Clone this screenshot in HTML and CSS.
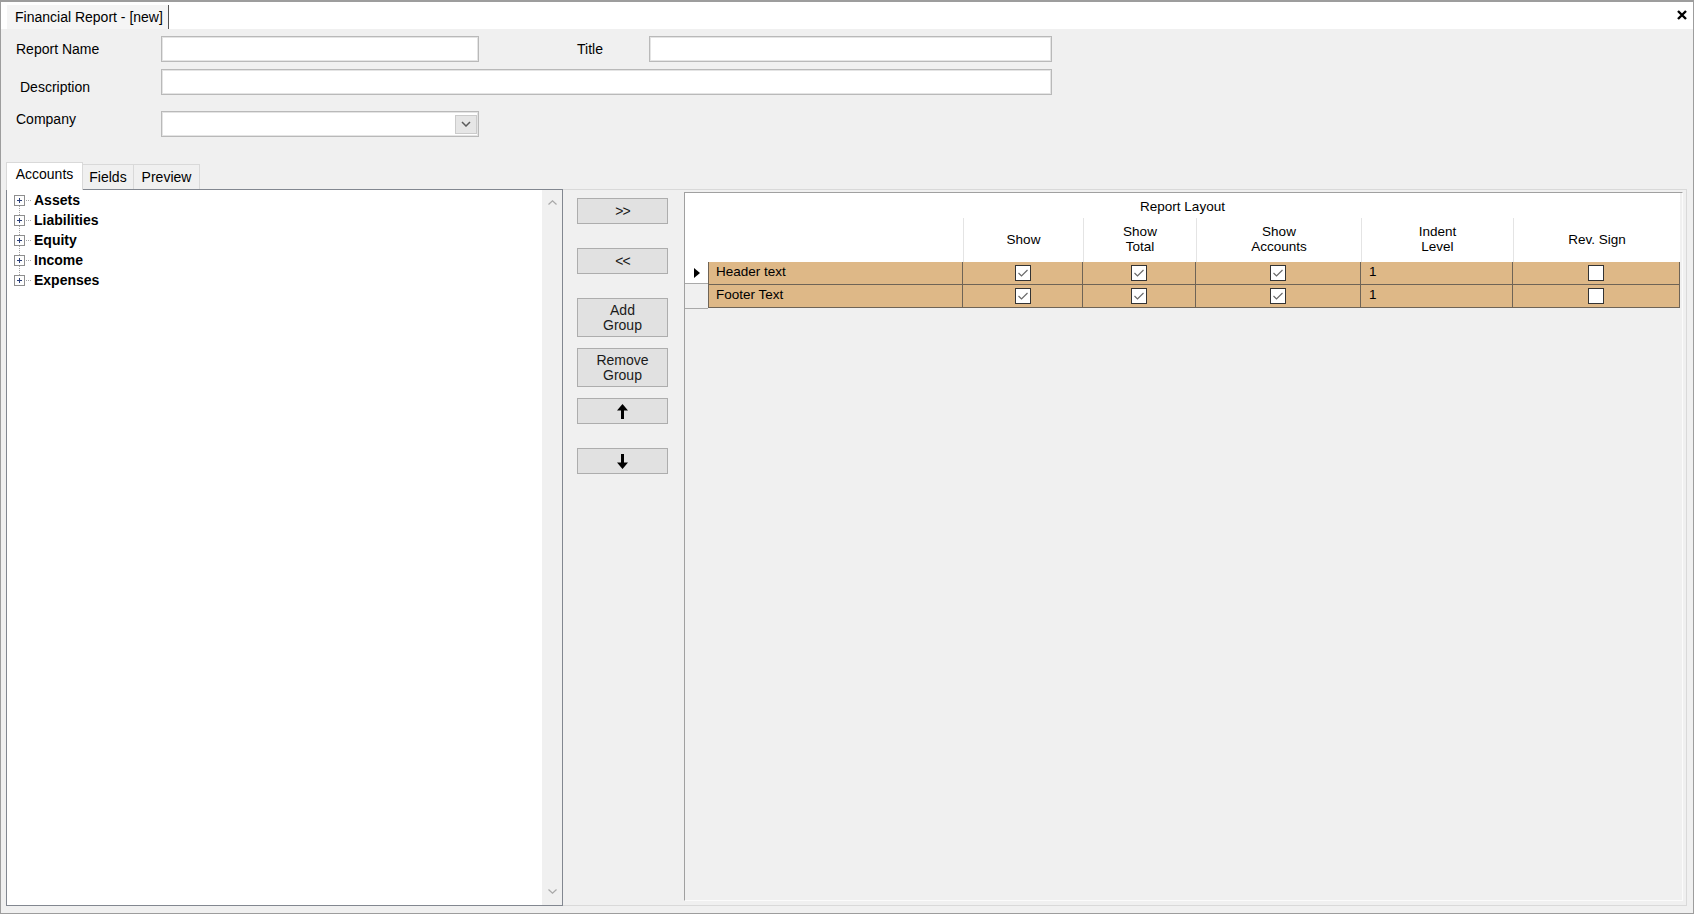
FILE: index.html
```html
<!DOCTYPE html>
<html>
<head>
<meta charset="utf-8">
<title>Financial Report</title>
<link rel="stylesheet" href="styles.css">
</head>
<body>
<div class="window">
  <div class="titlebar">
    <div class="doc-tab">Financial Report - [new]</div>
    <div class="close"><svg width="10" height="10" viewBox="0 0 10 10"><path d="M1 1L9 9M9 1L1 9" stroke="#000" stroke-width="2.4"/></svg></div>
  </div>

  <div class="row r1">
    <div class="lbl lbl-name">Report Name</div>
    <div class="input w-name"></div>
    <div class="lbl lbl-title">Title</div>
    <div class="input w-title"></div>
  </div>
  <div class="row r2">
    <div class="lbl lbl-desc">Description</div>
    <div class="input w-desc"></div>
  </div>
  <div class="row r3">
    <div class="lbl lbl-company">Company</div>
    <div class="input combo">
      <div class="combo-btn"><svg width="10" height="6" viewBox="0 0 10 6"><polyline points="1,1 5,5 9,1" fill="none" stroke="#5a5a5a" stroke-width="1.5"/></svg></div>
    </div>
  </div>

  <div class="tabs">
    <div class="tab active t-acc">Accounts</div>
    <div class="tab t-fields">Fields</div>
    <div class="tab t-prev">Preview</div>
  </div>

  <div class="page">
    <div class="tree">
      <div class="tree-content">
        <div class="tree-list">
          <div class="node"><span class="exp"><svg width="11" height="11" viewBox="0 0 11 11"><rect x="0.5" y="0.5" width="10" height="10" fill="#fdfdfd" stroke="#8e8e8e"/><path d="M3 5.5H8M5.5 3V8" stroke="#2b3f7a"/></svg></span><span class="conn"></span><span class="node-text">Assets</span></div>
          <div class="node"><span class="exp"><svg width="11" height="11" viewBox="0 0 11 11"><rect x="0.5" y="0.5" width="10" height="10" fill="#fdfdfd" stroke="#8e8e8e"/><path d="M3 5.5H8M5.5 3V8" stroke="#2b3f7a"/></svg></span><span class="conn"></span><span class="node-text">Liabilities</span></div>
          <div class="node"><span class="exp"><svg width="11" height="11" viewBox="0 0 11 11"><rect x="0.5" y="0.5" width="10" height="10" fill="#fdfdfd" stroke="#8e8e8e"/><path d="M3 5.5H8M5.5 3V8" stroke="#2b3f7a"/></svg></span><span class="conn"></span><span class="node-text">Equity</span></div>
          <div class="node"><span class="exp"><svg width="11" height="11" viewBox="0 0 11 11"><rect x="0.5" y="0.5" width="10" height="10" fill="#fdfdfd" stroke="#8e8e8e"/><path d="M3 5.5H8M5.5 3V8" stroke="#2b3f7a"/></svg></span><span class="conn"></span><span class="node-text">Income</span></div>
          <div class="node"><span class="exp"><svg width="11" height="11" viewBox="0 0 11 11"><rect x="0.5" y="0.5" width="10" height="10" fill="#fdfdfd" stroke="#8e8e8e"/><path d="M3 5.5H8M5.5 3V8" stroke="#2b3f7a"/></svg></span><span class="conn"></span><span class="node-text">Expenses</span></div>
        </div>
      </div>
      <div class="vscroll">
        <svg width="9" height="5" viewBox="0 0 9 5"><polyline points="0.5,4.5 4.5,0.8 8.5,4.5" fill="none" stroke="#a8a8a8" stroke-width="1.2"/></svg>
        <svg width="9" height="5" viewBox="0 0 9 5"><polyline points="0.5,0.5 4.5,4.2 8.5,0.5" fill="none" stroke="#a8a8a8" stroke-width="1.2"/></svg>
      </div>
    </div>

    <div class="mid">
      <div class="btn b1">&gt;&gt;</div>
      <div class="btn b2">&lt;&lt;</div>
      <div class="btn tall b3">Add<br>Group</div>
      <div class="btn tall b4">Remove<br>Group</div>
      <div class="btn b5"><svg width="11" height="15" viewBox="0 0 11 15"><path d="M5.5 0L11 6.5H7V15H4V6.5H0Z" fill="#000"/></svg></div>
      <div class="btn b6"><svg width="11" height="15" viewBox="0 0 11 15"><path d="M5.5 15L11 8.5H7V0H4V8.5H0Z" fill="#000"/></svg></div>
    </div>

    <div class="grid">
      <div class="dg">
        <div class="gh">Report Layout</div>

        <div class="ch"></div>
        <div class="ch"></div>
        <div class="ch sep">Show</div>
        <div class="ch sep">Show<br>Total</div>
        <div class="ch sep">Show<br>Accounts</div>
        <div class="ch sep">Indent<br>Level</div>
        <div class="ch sep">Rev. Sign</div>

        <div class="rh rh1"><svg width="6" height="10" viewBox="0 0 6 10"><path d="M0 0L6 5L0 10Z" fill="#000"/></svg></div>
        <div class="c name">Header text</div>
        <div class="c chk"><svg width="16" height="16" viewBox="0 0 16 16"><rect x="0.5" y="0.5" width="15" height="15" fill="#fff" stroke="#333"/><polyline points="3.5,8 6.5,11 12.5,5" fill="none" stroke="#6a6a6a" stroke-width="1.2"/></svg></div>
        <div class="c chk"><svg width="16" height="16" viewBox="0 0 16 16"><rect x="0.5" y="0.5" width="15" height="15" fill="#fff" stroke="#333"/><polyline points="3.5,8 6.5,11 12.5,5" fill="none" stroke="#6a6a6a" stroke-width="1.2"/></svg></div>
        <div class="c chk"><svg width="16" height="16" viewBox="0 0 16 16"><rect x="0.5" y="0.5" width="15" height="15" fill="#fff" stroke="#333"/><polyline points="3.5,8 6.5,11 12.5,5" fill="none" stroke="#6a6a6a" stroke-width="1.2"/></svg></div>
        <div class="c num">1</div>
        <div class="c chk"><svg width="16" height="16" viewBox="0 0 16 16"><rect x="0.5" y="0.5" width="15" height="15" fill="#fff" stroke="#333"/></svg></div>

        <div class="rh rh2"></div>
        <div class="c name">Footer Text</div>
        <div class="c chk"><svg width="16" height="16" viewBox="0 0 16 16"><rect x="0.5" y="0.5" width="15" height="15" fill="#fff" stroke="#333"/><polyline points="3.5,8 6.5,11 12.5,5" fill="none" stroke="#6a6a6a" stroke-width="1.2"/></svg></div>
        <div class="c chk"><svg width="16" height="16" viewBox="0 0 16 16"><rect x="0.5" y="0.5" width="15" height="15" fill="#fff" stroke="#333"/><polyline points="3.5,8 6.5,11 12.5,5" fill="none" stroke="#6a6a6a" stroke-width="1.2"/></svg></div>
        <div class="c chk"><svg width="16" height="16" viewBox="0 0 16 16"><rect x="0.5" y="0.5" width="15" height="15" fill="#fff" stroke="#333"/><polyline points="3.5,8 6.5,11 12.5,5" fill="none" stroke="#6a6a6a" stroke-width="1.2"/></svg></div>
        <div class="c num">1</div>
        <div class="c chk"><svg width="16" height="16" viewBox="0 0 16 16"><rect x="0.5" y="0.5" width="15" height="15" fill="#fff" stroke="#333"/></svg></div>
      </div>
    </div>
  </div>
</div>
</body>
</html>
```

FILE: styles.css
```css
html, body {
  margin: 0;
  padding: 0;
  background: #f0f0f0;
}

.window {
  width: 1694px;
  height: 914px;
  box-sizing: border-box;
  border: 1px solid #9d9d9d;
  border-top-width: 2px;
  background: #f0f0f0;
  display: flex;
  flex-direction: column;
  font-family: "Liberation Sans", Arial, sans-serif;
  font-size: 14px;
  color: #000;
  overflow: hidden;
}

/* ---------- title strip ---------- */
.titlebar {
  height: 27px;
  flex-shrink: 0;
  background: #fff;
  display: flex;
}

.doc-tab {
  margin-left: 6px;
  margin-top: 3px;
  height: 24px;
  line-height: 24px;
  padding: 0 5px 0 8px;
  background: #f5f5f5;
  border-right: 1px solid #555;
  box-sizing: border-box;
  white-space: nowrap;
}

.close {
  margin-left: auto;
  margin-right: 6px;
  margin-top: 8px;
  width: 10px;
  height: 10px;
  line-height: 0;
}

/* ---------- form ---------- */
.row {
  display: flex;
  align-items: flex-start;
  flex-shrink: 0;
}

.r1 { margin-top: 7px; }
.r2 { margin-top: 7px; }
.r3 { margin-top: 16px; }

.lbl {
  width: 160px;
  box-sizing: border-box;
  line-height: 16px;
  white-space: nowrap;
}

.lbl-name { padding-left: 15px; margin-top: 5px; }
.lbl-title { width: 72px; margin-left: 98px; margin-top: 5px; }
.lbl-desc { padding-left: 19px; margin-top: 10px; }
.lbl-company { padding-left: 15px; margin-top: 0; }

.input {
  height: 26px;
  box-sizing: border-box;
  background: #fff;
  border: 1px solid #b9b9b9;
  box-shadow: inset 0 0 0 1px #e4e4e4;
}

.w-name { width: 318px; }
.w-title { width: 403px; }
.w-desc { width: 891px; }

.combo {
  width: 318px;
  display: flex;
  justify-content: flex-end;
  align-items: center;
  padding-right: 1px;
}

.combo-btn {
  width: 22px;
  height: 19px;
  box-sizing: border-box;
  background: #e6e6e6;
  border: 1px solid #cbcbcb;
  display: flex;
  align-items: center;
  justify-content: center;
}

/* ---------- tabs ---------- */
.tabs {
  display: flex;
  align-items: flex-end;
  margin-top: 25px;
  padding-left: 5px;
  height: 27px;
  flex-shrink: 0;
  position: relative;
  z-index: 1;
}

.tab {
  height: 25px;
  box-sizing: border-box;
  border: 1px solid #d9d9d9;
  border-bottom: none;
  background: #f0f0f0;
  text-align: center;
  line-height: 16px;
  padding-top: 4px;
  white-space: nowrap;
}

.tab.active {
  height: 28px;
  margin-bottom: -1px;
  background: #fff;
  padding-top: 3px;
}

.t-acc { width: 77px; }
.t-fields { width: 51px; border-left: none; }
.t-prev { width: 66px; border-left: none; }

/* ---------- page ---------- */
.page {
  margin-left: 5px;
  width: 1681px;
  height: 717px;
  flex-shrink: 0;
  box-sizing: border-box;
  border: 1px solid #d9d9d9;
  display: flex;
}

.tree {
  width: 557px;
  flex-shrink: 0;
  margin: -1px 0 -1px -1px;
  box-sizing: border-box;
  border: 1px solid #828790;
  background: #fff;
  display: flex;
}

.tree-content {
  flex: 1;
}

.tree-list {
  height: 100px;
  background-image: repeating-linear-gradient(to bottom, #a3a3a3 0, #a3a3a3 1px, transparent 1px, transparent 2px);
  background-size: 1px 80px;
  background-position: 12px 10px;
  background-repeat: no-repeat;
}

.node {
  height: 20px;
  display: flex;
  align-items: center;
  font-weight: bold;
  white-space: nowrap;
}

.exp {
  width: 11px;
  height: 11px;
  margin-left: 7px;
  line-height: 0;
}

.conn {
  width: 5px;
  height: 0;
  border-top: 1px dotted #a3a3a3;
  margin: 0 3px 0 1px;
}

.vscroll {
  width: 20px;
  background: #f0f0f0;
  display: flex;
  flex-direction: column;
  justify-content: space-between;
  align-items: center;
  padding: 10px 0 11px;
  box-sizing: border-box;
}

/* ---------- middle buttons ---------- */
.mid {
  width: 121px;
  flex-shrink: 0;
  box-sizing: border-box;
  padding: 8px 0 0 14px;
  display: flex;
  flex-direction: column;
}

.btn {
  width: 91px;
  height: 26px;
  box-sizing: border-box;
  background: #e1e1e1;
  border: 1px solid #adadad;
  display: flex;
  align-items: center;
  justify-content: center;
  text-align: center;
  font-size: 14px;
  line-height: 15px;
  color: #1a1a1a;
}

.btn.tall { height: 39px; }

.b1 { letter-spacing: -1px; padding-top: 1px; }
.b2 { margin-top: 24px; letter-spacing: -1px; padding-top: 1px; }
.b3 { margin-top: 24px; }
.b4 { margin-top: 11px; }
.b5 { margin-top: 11px; }
.b6 { margin-top: 24px; }

/* ---------- grid ---------- */
.grid {
  flex: 1;
  margin: 2px 3px 4px 0;
  border-top: 1px solid #a0a0a0;
  border-left: 1px solid #a0a0a0;
  border-right: 1px solid #fbfbfb;
  border-bottom: 1px solid #fbfbfb;
  background: #f0f0f0;
}

.dg {
  display: grid;
  grid-template-columns: 23px 255px 120px 113px 165px 152px 167px;
  font-size: 13.5px;
}

.gh {
  grid-column: 1 / -1;
  height: 25px;
  background: #fff;
  text-align: center;
  line-height: 27px;
  font-size: 13.5px;
}

.ch {
  height: 44px;
  background: #fff;
  box-sizing: border-box;
  display: flex;
  align-items: center;
  justify-content: center;
  text-align: center;
  line-height: 15px;
  font-size: 13.5px;
  padding-bottom: 2px;
}

.ch.sep { border-left: 1px solid #e4e4e4; }

.rh {
  height: 23px;
  box-sizing: border-box;
  border-bottom: 1px solid #a9a9a9;
  display: flex;
  align-items: center;
  justify-content: center;
}

.rh1 { background: #fff; height: 22px; }
.rh2 { background: #f0f0f0; height: 24px; }

.c {
  height: 23px;
  box-sizing: border-box;
  background: #deb887;
  border-right: 1px solid #6f6456;
  border-bottom: 1px solid #6f6456;
  display: flex;
  align-items: center;
  white-space: nowrap;
}

.c.name {
  border-left: 1px solid #6f6456;
  padding-left: 7px;
  padding-bottom: 3px;
}

.c.chk {
  justify-content: center;
}

.c.chk svg { display: block; }

.c.num { padding-left: 8px; padding-bottom: 3px; }
```
